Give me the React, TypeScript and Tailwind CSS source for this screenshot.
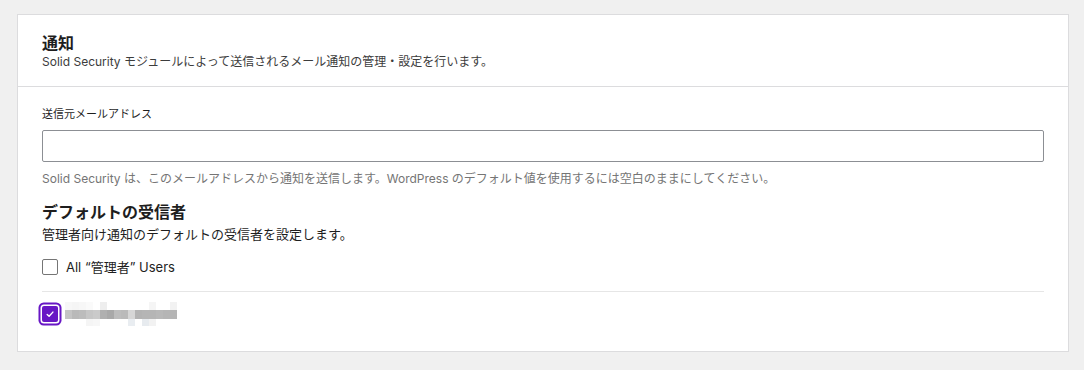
import React from "react";

const FONT = { fontFamily: '"Inter", "Noto Sans CJK JP", sans-serif' };

const TOP = ["#f7f7f7","#f5f5f5","#f7f7f7","#fafafa","#ffffff","#eeeeee","#ffffff","#ffffff","#ffffff","#ffffff","#ffffff","#ffffff","#f5f5f5","#ffffff","#ffffff","#f2f2f2"];
const MID = ["#c4c4c4","#b9b9b9","#bcbcbc","#c6c6c6","#cacaca","#b0b0b0","#a9a9a9","#bdbdbd","#bababa","#d6d6d6","#b3b3b3","#b5b5b5","#b5b5b5","#b8b8b8","#b5b5b5","#b5b5b5"];
const BOT = ["#ffffff","#ffffff","#ffffff","#f5f5f5","#f7f7f7","#ffffff","#ffffff","#ffffff","#ffffff","#e9edf1","#ffffff","#e7ebef","#f2f2f2","#ffffff","#ffffff","#ffffff"];

function Mosaic() {
  const row = (colors: string[], h: string) => (
    <div className={`flex ${h}`}>
      {colors.map((c, i) => (
        <div key={i} className="w-[7px] h-full" style={{ backgroundColor: c }} />
      ))}
    </div>
  );
  return (
    <div className="flex flex-col">
      {row(TOP, "h-[8px]")}
      {row(MID, "h-[9px]")}
      {row(BOT, "h-[7px]")}
    </div>
  );
}

export default function App() {
  return (
    <div className="min-h-[370px] bg-[#f0f0f0] pt-[14px] pl-[17px] pr-[15px]" style={FONT}>
      <div className="bg-white border border-[#dcdcde]">
        <div className="px-6 pt-[18px] pb-[15px] border-b border-[#dcdcde]">
          <h2 className="text-[16px] leading-[20px] font-semibold text-[#1e1e1e]">通知</h2>
          <p className="text-[12px] leading-[18px] text-[#3c3c3c]">
            Solid Security モジュールによって送信されるメール通知の管理・設定を行います。
          </p>
        </div>
        <div className="px-6 pt-[19px] pb-[25px]">
          <label className="block text-[11px] leading-[16px] font-normal text-[#1e1e1e]">送信元メールアドレス</label>
          <input
            type="text"
            className="mt-2 block w-full h-[32px] border border-[#8c8f94] rounded-[2px] bg-white outline-none"
          />
          <p className="mt-2 text-[12px] leading-[18px] text-[#757575]">
            Solid Security は、このメールアドレスから通知を送信します。WordPress のデフォルト値を使用するには空白のままにしてください。
          </p>
          <h3 className="mt-3 text-[16px] leading-[24px] font-semibold text-[#1e1e1e]">デフォルトの受信者</h3>
          <p className="text-[13px] leading-[20px] text-[#1e1e1e]">管理者向け通知のデフォルトの受信者を設定します。</p>
          <div className="mt-[11px] flex items-center h-[24px] gap-2">
            <span className="w-[16px] h-[16px] border border-[#757575] rounded-[2px] bg-white shrink-0" />
            <span className="text-[13px] leading-[20px] text-[#1e1e1e]">All “管理者” Users</span>
          </div>
          <div className="mt-3 h-px bg-[#e6e6e6]" />
          <div className="mt-[10px] flex items-center h-[24px] gap-[7px]">
            <span className="w-[16px] h-[16px] rounded-[2px] bg-[#6817c5] shrink-0 flex items-center justify-center shadow-[0_0_0_1.5px_#ffffff,0_0_0_3.5px_#6817c5]">
              <svg width="16" height="16" viewBox="0 0 16 16" fill="none">
                <path d="M5.2 8.4l1.9 1.9 3.8-4.2" stroke="#ffffff" strokeWidth="1.4" strokeLinecap="round" strokeLinejoin="round" />
              </svg>
            </span>
            <Mosaic />
          </div>
        </div>
      </div>
    </div>
  );
}
